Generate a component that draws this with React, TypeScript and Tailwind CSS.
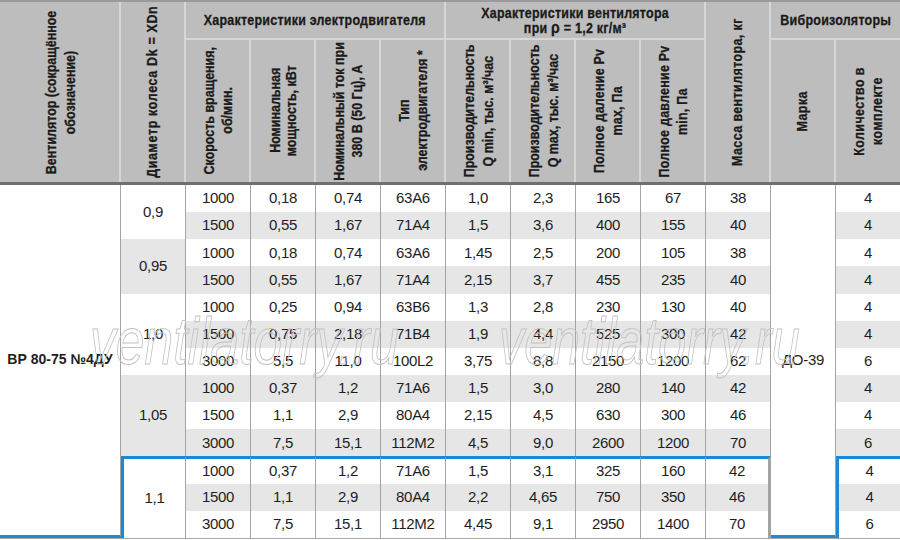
import React from "react";

const HF = "[font-family:'Liberation_Sans',Arial,sans-serif]";
const BF = "[font-family:'Liberation_Sans',Arial,sans-serif]";

const rows: string[][] = [
  ["1000", "0,18", "0,74", "63А6", "1,0", "2,3", "165", "67", "38", "4"],
  ["1500", "0,55", "1,67", "71А4", "1,5", "3,6", "400", "155", "40", "4"],
  ["1000", "0,18", "0,74", "63А6", "1,45", "2,5", "200", "105", "38", "4"],
  ["1500", "0,55", "1,67", "71А4", "2,15", "3,7", "455", "235", "40", "4"],
  ["1000", "0,25", "0,94", "63В6", "1,3", "2,8", "230", "130", "40", "4"],
  ["1500", "0,75", "2,18", "71В4", "1,9", "4,4", "525", "300", "42", "4"],
  ["3000", "5,5", "11,0", "100L2", "3,75", "8,8", "2150", "1200", "62", "6"],
  ["1000", "0,37", "1,2", "71А6", "1,5", "3,0", "280", "140", "42", "4"],
  ["1500", "1,1", "2,9", "80А4", "2,15", "4,5", "630", "300", "46", "4"],
  ["3000", "7,5", "15,1", "112М2", "4,5", "9,0", "2600", "1200", "70", "6"],
  ["1000", "0,37", "1,2", "71А6", "1,5", "3,1", "325", "160", "42", "4"],
  ["1500", "1,1", "2,9", "80А4", "2,2", "4,65", "750", "350", "46", "4"],
  ["3000", "7,5", "15,1", "112М2", "4,45", "9,1", "2950", "1400", "70", "6"],
];

function VH({
  children,
  className = "",
  inner = "",
  last = false,
}: {
  children: React.ReactNode;
  className?: string;
  inner?: string;
  last?: boolean;
}) {
  return (
    <div className={`flex items-center justify-center ${last ? "" : "border-r-2 border-[#d7d7d7]"} ${className}`}>
      <div className={`[writing-mode:vertical-rl] rotate-180 scale-y-[0.83] whitespace-nowrap text-center ${inner}`}>
        {children}
      </div>
    </div>
  );
}

function Header() {
  return (
    <div
      className={`grid grid-cols-[121px_repeat(11,65px)_64px] grid-rows-[38px_142px] border-t-2 border-b-[3px] border-t-[#9a9a9a] border-b-[#6f6f6f] bg-[#bdbdbd] text-[15px] font-bold text-[#1a1a1a] [-webkit-text-stroke:0.3px_#1a1a1a] ${HF}`}
    >
      <VH className="row-span-2" inner="leading-[19px]">
        Вентилятор (сокращённое
        <br />
        обозначение)
      </VH>
      <VH className="row-span-2" inner="tracking-[0.8px]">
        Диаметр колеса Dk = XDn
      </VH>
      <div className="col-span-4 flex items-center justify-center border-r-2 border-b-2 border-[#d7d7d7]">
        <span className="inline-block scale-x-[0.83] whitespace-nowrap tracking-[0.3px]">Характеристики электродвигателя</span>
      </div>
      <div className="col-span-4 flex items-center justify-center border-r-2 border-b-2 border-[#d7d7d7] text-center">
        <div className="scale-x-[0.83] whitespace-nowrap leading-[15px] tracking-[0.3px]">
          Характеристики вентилятора
          <br />
          при <span className="text-[17px] leading-[15px]">ρ</span> = 1,2 кг/м³
        </div>
      </div>
      <VH className="row-span-2" inner="tracking-[0.5px]">
        Масса вентилятора, кг
      </VH>
      <div className="col-span-2 flex items-center justify-center border-b-2 border-[#d7d7d7]">
        <span className="inline-block scale-x-[0.83] whitespace-nowrap tracking-[0.3px]">Виброизоляторы</span>
      </div>

      <VH inner="leading-[18px]">
        Скорость вращения,
        <br />
        об/мин.
      </VH>
      <VH inner="leading-[16px]">
        Номинальная
        <br />
        мощность, кВт
      </VH>
      <VH inner="leading-[18px]">
        Номинальный ток при
        <br />
        380 В (50 Гц), А
      </VH>
      <VH inner="leading-[18px]">
        Тип
        <br />
        электродвигателя *
      </VH>
      <VH inner="leading-[19px]">
        Производительность
        <br />Q min, тыс. м³/час
      </VH>
      <VH inner="leading-[19px]">
        Производительность
        <br />Q max, тыс. м³/час
      </VH>
      <VH inner="leading-[18px] tracking-[0.3px]">
        Полное даление Pv
        <br />
        max, Па
      </VH>
      <VH inner="leading-[18px] tracking-[0.3px]">
        Полное давление Pv
        <br />
        min, Па
      </VH>
      <VH inner="tracking-[0.5px]">Марка</VH>
      <VH last inner="leading-[18px] tracking-[0.5px]">
        Количество в
        <br />
        комплекте
      </VH>
    </div>
  );
}

const diameters: { v: string; start: string; span: string; gray: boolean }[] = [
  { v: "0,9", start: "row-start-1", span: "row-span-2", gray: false },
  { v: "0,95", start: "row-start-3", span: "row-span-2", gray: true },
  { v: "1,0", start: "row-start-5", span: "row-span-3", gray: false },
  { v: "1,05", start: "row-start-8", span: "row-span-3", gray: true },
  { v: "1,1", start: "row-start-11", span: "row-span-3", gray: false },
];

function Body() {
  return (
    <div className="relative">
      <div
        className={`grid grid-cols-[121px_repeat(11,65px)_64px] grid-rows-[repeat(13,27.15px)] border-b border-[#a8a8a8] text-[15px] tracking-[-0.3px] text-[#1e1e1e] ${BF}`}
      >
        <div className="col-start-1 row-start-1 row-span-13 flex items-center justify-center border-r border-b-[3px] border-r-[#a3a3a3] border-b-[#1a89d6] bg-white text-[14px] font-bold tracking-normal">
          ВР 80-75 №4ДУ
        </div>
        <div className="col-start-12 row-start-1 row-span-13 flex items-center justify-center border-r border-b-[3px] border-r-[#a3a3a3] border-b-[#1a89d6] bg-white">
          ДО-39
        </div>
        {diameters.map((d, i) => (
          <div
            key={d.v}
            className={`col-start-2 ${d.start} ${d.span} flex items-center justify-center border-r border-r-[#a3a3a3] ${
              d.gray ? "bg-[#e6e6e6]" : "bg-white"
            } ${i === 4 ? "border-l-[3px] border-t-[3px] border-l-[#1a89d6] border-t-[#1a89d6]" : ""}`}
          >
            {d.v}
          </div>
        ))}
        {rows.map((r, ri) =>
          r.map((c, ci) => {
            const gray = ri % 2 === 1;
            const hl = ri >= 10;
            const isMass = ci === 8;
            const isCount = ci === 9;
            let cls = `flex items-center justify-center ${gray ? "bg-[#e6e6e6]" : "bg-white"}`;
            if (!isCount) cls += " border-r border-r-[#a3a3a3]";
            if (ri === 10) cls += " border-t-[3px] border-t-[#1a89d6]";
            if (hl && isMass) cls += " border-r-[3px] border-r-[#1a89d6]";
            if (hl && isCount) cls += " border-l-[3px] border-l-[#1a89d6]";
            return (
              <div key={`${ri}-${ci}`} className={cls}>
                {c}
              </div>
            );
          })
        )}
      </div>
      <span
        className={`pointer-events-none absolute left-[90px] top-[122px] origin-left scale-x-[0.77] text-[67px] italic leading-none text-transparent [-webkit-text-stroke:1px_#c2c2c2] ${HF}`}
      >
        ventilatorry.ru
      </span>
      <span
        className={`pointer-events-none absolute left-[499px] top-[122px] origin-left scale-x-[0.75] text-[67px] italic leading-none text-transparent [-webkit-text-stroke:1px_#c2c2c2] ${HF}`}
      >
        ventilatorry.ru
      </span>
    </div>
  );
}

export default function App() {
  return (
    <div className="h-[540px] w-[900px] overflow-hidden bg-white">
      <Header />
      <Body />
    </div>
  );
}
